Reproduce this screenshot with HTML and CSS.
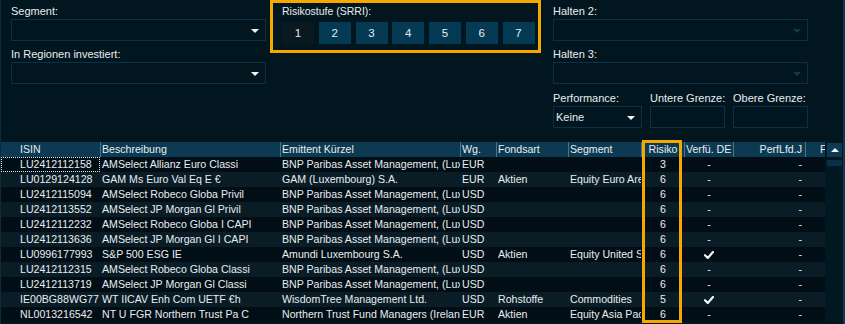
FILE: index.html
```html
<!DOCTYPE html>
<html lang="de">
<head>
    <meta charset="UTF-8">
    <title>Fondssuche</title>
    <link rel="stylesheet" href="styles.css">
</head>
<body>

<div class="page">

    <!-- Filter oben -->
    <div class="filters">
        <div class="col">
            <div class="field">
                <div class="label">Segment:</div>
                <div class="select"><span class="arrow"></span></div>
            </div>
            <div class="field">
                <div class="label">In Regionen investiert:</div>
                <div class="select"><span class="arrow"></span></div>
            </div>
        </div>

        <div class="risk">
            <div class="label">Risikostufe (SRRI):</div>
            <div class="risk-buttons">
                <div class="rbtn off">1</div>
                <div class="rbtn">2</div>
                <div class="rbtn">3</div>
                <div class="rbtn">4</div>
                <div class="rbtn">5</div>
                <div class="rbtn">6</div>
                <div class="rbtn">7</div>
            </div>
        </div>

        <div class="col col-right">
            <div class="field">
                <div class="label">Halten 2:</div>
                <div class="select disabled"><span class="arrow"></span></div>
            </div>
            <div class="field">
                <div class="label">Halten 3:</div>
                <div class="select disabled"><span class="arrow"></span></div>
            </div>
            <div class="field perf">
                <div class="perf-item w-perf">
                    <div class="label">Performance:</div>
                    <div class="select"><span class="value">Keine</span><span class="arrow"></span></div>
                </div>
                <div class="perf-item w-limit">
                    <div class="label">Untere Grenze:</div>
                    <div class="select"></div>
                </div>
                <div class="perf-item w-limit">
                    <div class="label">Obere Grenze:</div>
                    <div class="select"></div>
                </div>
            </div>
        </div>
    </div>

    <!-- Tabelle -->
    <div class="table-wrap">
        <div class="grid">
            <div class="row head">
                <div class="c isin">ISIN</div>
                <div class="c">Beschreibung</div>
                <div class="c">Emittent Kürzel</div>
                <div class="c">Wg.</div>
                <div class="c">Fondsart</div>
                <div class="c">Segment</div>
                <div class="c center">Risiko</div>
                <div class="c">Verfü. DE</div>
                <div class="c right">PerfLfd.J</div>
                <div class="c last">F</div>
            </div>

            <div class="row">
                <div class="c isin focus">LU2412112158</div>
                <div class="c">AMSelect Allianz Euro Classi</div>
                <div class="c">BNP Paribas Asset Management, (Luxembourg)</div>
                <div class="c">EUR</div>
                <div class="c"></div>
                <div class="c"></div>
                <div class="c center">3</div>
                <div class="c center">-</div>
                <div class="c right">-</div>
                <div class="c last"></div>
            </div>
            <div class="row">
                <div class="c isin">LU0129124128</div>
                <div class="c">GAM Ms Euro Val Eq E €</div>
                <div class="c">GAM (Luxembourg) S.A.</div>
                <div class="c">EUR</div>
                <div class="c">Aktien</div>
                <div class="c">Equity Euro Area</div>
                <div class="c center">6</div>
                <div class="c center">-</div>
                <div class="c right">-</div>
                <div class="c last"></div>
            </div>
            <div class="row">
                <div class="c isin">LU2412115094</div>
                <div class="c">AMSelect Robeco Globa Privil</div>
                <div class="c">BNP Paribas Asset Management, (Luxembourg)</div>
                <div class="c">USD</div>
                <div class="c"></div>
                <div class="c"></div>
                <div class="c center">6</div>
                <div class="c center">-</div>
                <div class="c right">-</div>
                <div class="c last"></div>
            </div>
            <div class="row">
                <div class="c isin">LU2412113552</div>
                <div class="c">AMSelect JP Morgan Gl Privil</div>
                <div class="c">BNP Paribas Asset Management, (Luxembourg)</div>
                <div class="c">USD</div>
                <div class="c"></div>
                <div class="c"></div>
                <div class="c center">6</div>
                <div class="c center">-</div>
                <div class="c right">-</div>
                <div class="c last"></div>
            </div>
            <div class="row">
                <div class="c isin">LU2412112232</div>
                <div class="c">AMSelect Robeco Globa I CAPI</div>
                <div class="c">BNP Paribas Asset Management, (Luxembourg)</div>
                <div class="c">USD</div>
                <div class="c"></div>
                <div class="c"></div>
                <div class="c center">6</div>
                <div class="c center">-</div>
                <div class="c right">-</div>
                <div class="c last"></div>
            </div>
            <div class="row">
                <div class="c isin">LU2412113636</div>
                <div class="c">AMSelect JP Morgan Gl I CAPI</div>
                <div class="c">BNP Paribas Asset Management, (Luxembourg)</div>
                <div class="c">USD</div>
                <div class="c"></div>
                <div class="c"></div>
                <div class="c center">6</div>
                <div class="c center">-</div>
                <div class="c right">-</div>
                <div class="c last"></div>
            </div>
            <div class="row">
                <div class="c isin">LU0996177993</div>
                <div class="c">S&amp;P 500 ESG IE</div>
                <div class="c">Amundi Luxembourg S.A.</div>
                <div class="c">USD</div>
                <div class="c">Aktien</div>
                <div class="c">Equity United States</div>
                <div class="c center">6</div>
                <div class="c center"><svg class="check" width="10" height="8" viewBox="0 0 10 8"><path d="M1 4.2 L3.8 7 L9 1" /></svg></div>
                <div class="c right">-</div>
                <div class="c last"></div>
            </div>
            <div class="row">
                <div class="c isin">LU2412112315</div>
                <div class="c">AMSelect Robeco Globa Classi</div>
                <div class="c">BNP Paribas Asset Management, (Luxembourg)</div>
                <div class="c">USD</div>
                <div class="c"></div>
                <div class="c"></div>
                <div class="c center">6</div>
                <div class="c center">-</div>
                <div class="c right">-</div>
                <div class="c last"></div>
            </div>
            <div class="row">
                <div class="c isin">LU2412113719</div>
                <div class="c">AMSelect JP Morgan Gl Classi</div>
                <div class="c">BNP Paribas Asset Management, (Luxembourg)</div>
                <div class="c">USD</div>
                <div class="c"></div>
                <div class="c"></div>
                <div class="c center">6</div>
                <div class="c center">-</div>
                <div class="c right">-</div>
                <div class="c last"></div>
            </div>
            <div class="row">
                <div class="c isin">IE00BG88WG77</div>
                <div class="c">WT IICAV Enh Com UETF €h</div>
                <div class="c">WisdomTree Management Ltd.</div>
                <div class="c">USD</div>
                <div class="c">Rohstoffe</div>
                <div class="c">Commodities</div>
                <div class="c center">5</div>
                <div class="c center"><svg class="check" width="10" height="8" viewBox="0 0 10 8"><path d="M1 4.2 L3.8 7 L9 1" /></svg></div>
                <div class="c right">-</div>
                <div class="c last"></div>
            </div>
            <div class="row">
                <div class="c isin">NL0013216542</div>
                <div class="c">NT U FGR Northern Trust Pa C</div>
                <div class="c">Northern Trust Fund Managers (Ireland)</div>
                <div class="c">EUR</div>
                <div class="c">Aktien</div>
                <div class="c">Equity Asia Pacific</div>
                <div class="c center">6</div>
                <div class="c center">-</div>
                <div class="c right">-</div>
                <div class="c last"></div>
            </div>
        </div>

        <div class="scrollbar">
            <div class="scroll-up"></div>
            <div class="scroll-thumb"></div>
        </div>

        <!-- Markierung Spalte Risiko -->
        <div class="highlight"></div>
    </div>

</div>

</body>
</html>
```

FILE: styles.css
```css
body {
    margin: 0;
    background: #021620;
    color: #e8edf0;
    font-family: "Liberation Sans", Arial, sans-serif;
    font-size: 11px;
}

.page {
    width: 845px;
    height: 324px;
    box-sizing: border-box;
    border-left: 1px solid #0a2c3e;
    border-right: 2px solid #0b3a52;
    overflow: hidden;
}

/* Filterbereich */
.filters {
    display: flex;
    height: 142px;
    padding-left: 10px;
}

.col {
    width: 255px;
    padding-top: 4px;
}

.col-right {
    margin-left: 12px;
}

.field + .field {
    margin-top: 6px;
}

.field.perf {
    margin-top: 7px;
    display: flex;
    gap: 8px;
}

.w-perf {
    width: 89px;
}

.w-limit {
    width: 75px;
}

.label {
    line-height: 15px;
    white-space: nowrap;
}

.risk .label {
    font-size: 10.5px;
}

.select {
    position: relative;
    height: 22px;
    box-sizing: border-box;
    border: 1px solid #0d3048;
    line-height: 20px;
    padding-left: 2px;
}

.arrow {
    position: absolute;
    right: 6px;
    top: 9px;
    border-left: 4px solid transparent;
    border-right: 4px solid transparent;
    border-top: 4px solid #f2f5f7;
}

.select.disabled .arrow {
    border-top-color: #0d3a52;
}

/* SRRI Box */
.risk {
    margin-left: 4px;
    width: 271px;
    height: 53px;
    box-sizing: border-box;
    border: 3px solid #f6a800;
    padding: 1px 0 0 9px;
}

.risk-buttons {
    display: flex;
    gap: 4.75px;
    margin-top: 3px;
}

.rbtn {
    width: 32px;
    height: 22px;
    line-height: 22px;
    text-align: center;
    font-size: 11.5px;
    background: #043a54;
}

.rbtn.off {
    background: #0a181f;
}

/* Tabelle */
.table-wrap {
    position: relative;
    display: flex;
}

.grid {
    width: 824px;
    font-size: 10.6px;
}

.row {
    display: grid;
    grid-template-columns: 99px 180px 180px 36px 72px 73px 43px 49px 72px 20px;
    height: 15px;
    line-height: 15px;
    background: #020e15;
}

.row:nth-child(odd) {
    background: #0a1c26;
}

.row.head {
    background: #0b3a52;
}

.c {
    overflow: hidden;
    white-space: nowrap;
    border-left: 1px solid transparent;
    padding-left: 1px;
    box-sizing: border-box;
}

.head .c + .c {
    border-left-color: #4a7488;
}

.c.isin {
    padding-left: 18px;
}

.c.focus {
    outline: 1px dotted #e0e6ea;
    outline-offset: -1px;
}

.c.center {
    text-align: center;
    padding-left: 0;
}

.c.right {
    text-align: right;
    padding-right: 3px;
}

.c.last {
    padding-left: 14px;
}

.check {
    vertical-align: -1px;
}

.check path {
    fill: none;
    stroke: #f2f5f7;
    stroke-width: 2.2;
    stroke-linecap: round;
    stroke-linejoin: round;
}

.scrollbar {
    width: 18px;
    background: #011722;
}

.scroll-up {
    position: relative;
    margin: 1px 1px 0 2px;
    height: 14px;
    background: #0b3a52;
}

.scroll-up::after {
    content: "";
    position: absolute;
    left: 4px;
    top: 5px;
    border-left: 4px solid transparent;
    border-right: 4px solid transparent;
    border-bottom: 4px solid #f2f5f7;
}

.scroll-thumb {
    margin: 3px 1px 0 2px;
    height: 6px;
    background: #0b3045;
}

.highlight {
    position: absolute;
    left: 641px;
    top: -2px;
    width: 40px;
    height: 183px;
    box-sizing: border-box;
    border: 3px solid #f6a800;
}
```
